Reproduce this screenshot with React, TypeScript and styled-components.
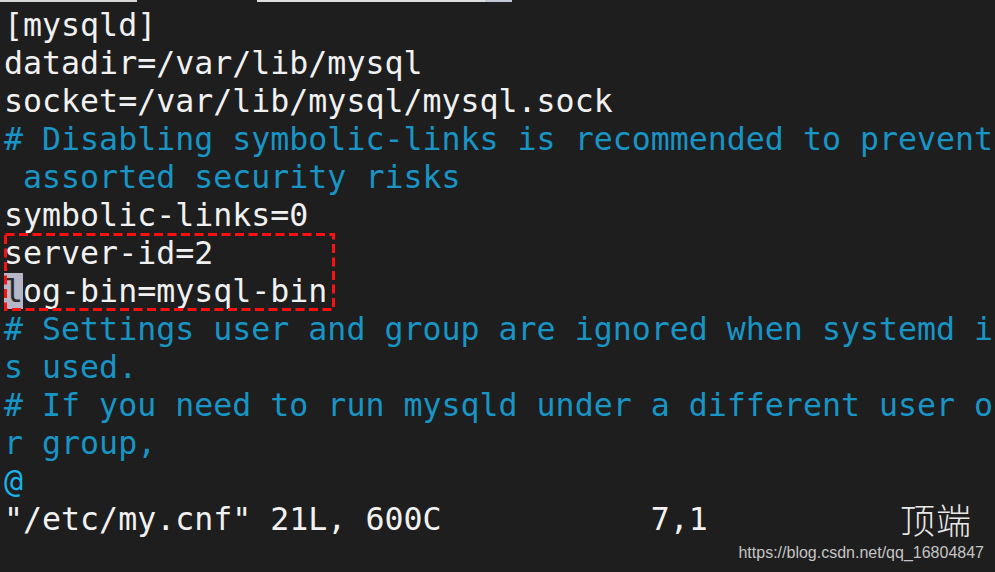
import React from "react";
import styled, { createGlobalStyle } from "styled-components";

const GlobalStyle = createGlobalStyle`
  html, body { margin: 0; padding: 0; background: #1e1e1e; }
  #root { width: 995px; height: 572px; }
`;

const Screen = styled.div`
  position: relative;
  width: 995px;
  height: 572px;
  background: #1e1e1e;
  overflow: hidden;
  display: flex;
  flex-direction: column;
`;

const TabStrip = styled.div`
  display: flex;
  height: 2px;
  flex: none;
`;

const TabEdge = styled.div<{ $w: number; $c: string }>`
  width: ${(p) => p.$w}px;
  height: 100%;
  background: ${(p) => p.$c};
`;

const Editor = styled.div`
  display: flex;
  flex-direction: column;
  padding: 4px 0 0 4px;
  font-family: "DejaVu Sans Mono", "Liberation Mono", monospace;
  font-size: 31.6px;
`;

const Line = styled.div<{ $tone?: "text" | "comment" | "tilde" }>`
  height: 38px;
  line-height: 38px;
  white-space: pre;
  color: ${(p) =>
    p.$tone === "comment" ? "#1894c5" : p.$tone === "tilde" ? "#1ab2e8" : "#f1f1f1"};
`;

const Marked = styled.div`
  position: relative;
  display: flex;
  flex-direction: column;
`;

const DashBox = styled.svg`
  position: absolute;
  left: 0;
  top: -1px;
  width: 331px;
  height: 78px;
  pointer-events: none;
`;

const Cursor = styled.span`
  background: #b6b6c6;
  color: #2a2a2a;
`;

const StatusLine = styled.div`
  display: flex;
  height: 38px;
  line-height: 38px;
  white-space: pre;
  color: #f1f1f1;
`;

const Cell = styled.span<{ $cols: number }>`
  display: inline-block;
  width: ${(p) => p.$cols}ch;
  flex: none;
`;

const TopLabel = styled.span`
  font-family: "Noto Sans CJK SC", sans-serif;
  font-weight: 300;
  font-size: 35px;
  letter-spacing: 1px;
  margin-left: 2px;
  color: #e8e8e8;
`;

const Watermark = styled.div`
  position: absolute;
  right: 11px;
  bottom: 10px;
  font-family: "Liberation Sans", Arial, sans-serif;
  font-size: 16px;
  color: #c4c4c4;
`;

export default function App() {
  return (
    <>
      <GlobalStyle />
      <Screen>
        <TabStrip>
          <TabEdge $w={137} $c="#d6d6d6" />
          <TabEdge $w={120} $c="#1e1e1e" />
          <TabEdge $w={228} $c="#dedede" />
          <TabEdge $w={27} $c="#c4c8d6" />
        </TabStrip>
        <Editor>
          <Line>[mysqld]</Line>
          <Line>datadir=/var/lib/mysql</Line>
          <Line>socket=/var/lib/mysql/mysql.sock</Line>
          <Line $tone="comment"># Disabling symbolic-links is recommended to prevent</Line>
          <Line $tone="comment"> assorted security risks</Line>
          <Line>symbolic-links=0</Line>
          <Marked>
            <Line>server-id=2</Line>
            <Line>
              <Cursor>l</Cursor>og-bin=mysql-bin
            </Line>
            <DashBox viewBox="0 0 331 78">
              <rect
                x="1.5"
                y="1.5"
                width="328"
                height="75"
                fill="none"
                stroke="#ff1010"
                strokeWidth="3"
                strokeDasharray="9 4.5"
              />
            </DashBox>
          </Marked>
          <Line $tone="comment"># Settings user and group are ignored when systemd i</Line>
          <Line $tone="comment">s used.</Line>
          <Line $tone="comment"># If you need to run mysqld under a different user o</Line>
          <Line $tone="comment">r group,</Line>
          <Line $tone="tilde">@</Line>
          <StatusLine>
            <Cell $cols={34}>"/etc/my.cnf" 21L, 600C</Cell>
            <Cell $cols={13}>7,1</Cell>
            <TopLabel>顶端</TopLabel>
          </StatusLine>
        </Editor>
        <Watermark>https://blog.csdn.net/qq_16804847</Watermark>
      </Screen>
    </>
  );
}
